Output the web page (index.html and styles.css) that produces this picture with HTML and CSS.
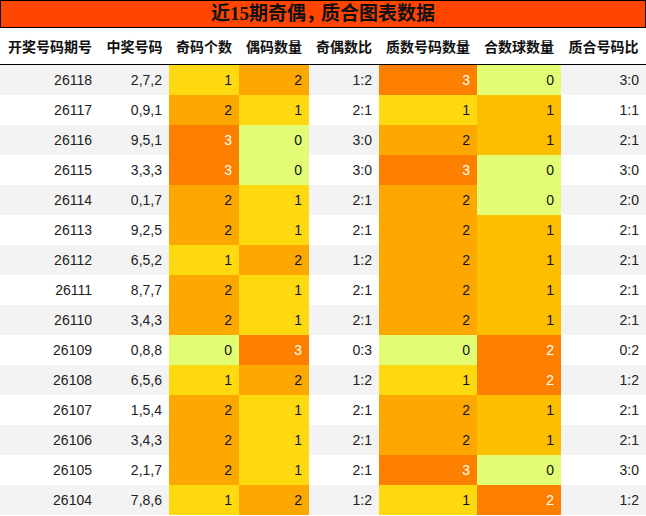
FILE: index.html
```html
<!DOCTYPE html>
<html lang="zh">
<head>
<meta charset="utf-8">
<title>近15期奇偶，质合图表数据</title>
<link rel="stylesheet" href="styles.css">
</head>
<body>
<div class="title">近15期奇偶<span class="comma">，</span>质合图表数据</div>
<table class="data">
  <colgroup>
    <col class="w100"><col class="w69"><col class="w70"><col class="w70"><col class="w70"><col class="w98"><col class="w84"><col class="w85">
  </colgroup>
  <thead>
    <tr>
      <th>开奖号码期号</th><th>中奖号码</th><th>奇码个数</th><th>偶码数量</th><th>奇偶数比</th><th>质数号码数量</th><th>合数球数量</th><th>质合号码比</th>
    </tr>
  </thead>
  <tbody>
    <tr><td>26118</td><td>2,7,2</td><td class="c1">1</td><td class="c2">2</td><td>1:2</td><td class="c3">3</td><td class="c0">0</td><td>3:0</td></tr>
    <tr><td>26117</td><td>0,9,1</td><td class="c2">2</td><td class="c1">1</td><td>2:1</td><td class="c1">1</td><td class="ca">1</td><td>1:1</td></tr>
    <tr><td>26116</td><td>9,5,1</td><td class="c3">3</td><td class="c0">0</td><td>3:0</td><td class="c2">2</td><td class="ca">1</td><td>2:1</td></tr>
    <tr><td>26115</td><td>3,3,3</td><td class="c3">3</td><td class="c0">0</td><td>3:0</td><td class="c3">3</td><td class="c0">0</td><td>3:0</td></tr>
    <tr><td>26114</td><td>0,1,7</td><td class="c2">2</td><td class="c1">1</td><td>2:1</td><td class="c2">2</td><td class="c0">0</td><td>2:0</td></tr>
    <tr><td>26113</td><td>9,2,5</td><td class="c2">2</td><td class="c1">1</td><td>2:1</td><td class="c2">2</td><td class="ca">1</td><td>2:1</td></tr>
    <tr><td>26112</td><td>6,5,2</td><td class="c1">1</td><td class="c2">2</td><td>1:2</td><td class="c2">2</td><td class="ca">1</td><td>2:1</td></tr>
    <tr><td>26111</td><td>8,7,7</td><td class="c2">2</td><td class="c1">1</td><td>2:1</td><td class="c2">2</td><td class="ca">1</td><td>2:1</td></tr>
    <tr><td>26110</td><td>3,4,3</td><td class="c2">2</td><td class="c1">1</td><td>2:1</td><td class="c2">2</td><td class="ca">1</td><td>2:1</td></tr>
    <tr><td>26109</td><td>0,8,8</td><td class="c0">0</td><td class="c3">3</td><td>0:3</td><td class="c0">0</td><td class="c3">2</td><td>0:2</td></tr>
    <tr><td>26108</td><td>6,5,6</td><td class="c1">1</td><td class="c2">2</td><td>1:2</td><td class="c1">1</td><td class="c3">2</td><td>1:2</td></tr>
    <tr><td>26107</td><td>1,5,4</td><td class="c2">2</td><td class="c1">1</td><td>2:1</td><td class="c2">2</td><td class="ca">1</td><td>2:1</td></tr>
    <tr><td>26106</td><td>3,4,3</td><td class="c2">2</td><td class="c1">1</td><td>2:1</td><td class="c2">2</td><td class="ca">1</td><td>2:1</td></tr>
    <tr><td>26105</td><td>2,1,7</td><td class="c2">2</td><td class="c1">1</td><td>2:1</td><td class="c3">3</td><td class="c0">0</td><td>3:0</td></tr>
    <tr><td>26104</td><td>7,8,6</td><td class="c1">1</td><td class="c2">2</td><td>1:2</td><td class="c1">1</td><td class="c3">2</td><td>1:2</td></tr>
  </tbody>
</table>
</body>
</html>
```
FILE: styles.css
```css
html, body {
  margin: 0;
  padding: 0;
  background: #ffffff;
}

body {
  width: 646px;
  font-family: "Liberation Sans", "Noto Sans CJK SC", sans-serif;
  color: #111111;
}

.title {
  box-sizing: border-box;
  height: 28px;
  border: 1px solid #000000;
  background: #ff4500;
  color: #111111;
  text-align: center;
  font-family: "Liberation Serif", "Noto Sans CJK SC", serif;
  font-weight: bold;
  font-size: 19px;
  line-height: 26px;
}

.title .comma {
  letter-spacing: -4px;
}

.data {
  width: 646px;
  table-layout: fixed;
  border-collapse: collapse;
  border-spacing: 0;
}

.w100 { width: 100px; }
.w69 { width: 69px; }
.w70 { width: 70px; }
.w98 { width: 98px; }
.w84 { width: 84px; }
.w85 { width: 85px; }

.data th {
  height: 36px;
  padding: 0;
  border-bottom: 1px solid #000000;
  font-family: "Noto Sans CJK SC", sans-serif;
  font-weight: bold;
  font-size: 14px;
  text-align: center;
  vertical-align: middle;
  color: #111111;
  white-space: nowrap;
}

.data td {
  height: 30px;
  padding: 0 7px 0 0;
  font-size: 14px;
  text-align: right;
  vertical-align: middle;
  color: #222222;
  box-sizing: border-box;
}

.data td:first-child {
  padding-right: 8px;
}

.data tbody tr:nth-child(odd) {
  background: #f3f3f3;
}

.data tbody tr:nth-child(even) {
  background: #ffffff;
}

.data td.c0 { background: #e2fd73; color: #111111; }
.data td.c1 { background: #fed910; color: #111111; }
.data td.c2 { background: #fda800; color: #111111; }
.data td.ca { background: #fdbe00; color: #111111; }
.data td.c3 { background: #fd7f00; color: #ffffff; }
```
